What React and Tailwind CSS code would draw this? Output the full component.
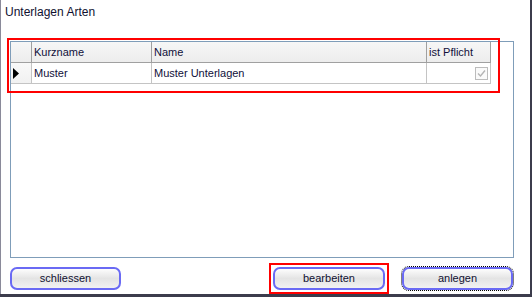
const font = { fontFamily: '"Liberation Sans", Arial, sans-serif' }

const Button = ({ label, focused, className = "" }) => (
  <div className={`${className} ${focused ? "outline outline-1 outline-dotted outline-black" : ""} h-[23px] rounded-[7px]`}>
    <div className="h-full rounded-[7px] border-2 border-[#6a6af4] bg-gradient-to-b from-[#fdfdfd] via-[#e4e4e4] to-[#f2f2f2] flex items-center justify-center text-[11px] text-[#101030]">
      {label}
    </div>
  </div>
)

const HeadCell = ({ children, className = "" }) => (
  <div
    className={`h-[21px] border-r border-b border-[#a0a0a0] bg-gradient-to-b from-[#f7f7f7] to-[#ededed] flex items-center pl-[2px] text-[11px] text-[#10103a] ${className}`}
  >
    {children}
  </div>
)

const Cell = ({ children, className = "" }) => (
  <div className={`h-[21px] border-r border-b border-[#c4c4c4] bg-white flex items-center pl-[2px] text-[11px] text-[#10103a] ${className}`}>
    {children}
  </div>
)

export default function App() {
  return (
    <div className="w-[532px] h-[297px] bg-[#3c3c4c] overflow-hidden" style={font}>
      <div className="w-[530px] h-[294px] bg-white border-l border-[#8a8a9a] flex flex-col">
        <div className="h-[28px] pl-[4px] pt-[5px] text-[12px] text-[#101030] leading-[14px]">Unterlagen Arten</div>

        <div className="relative ml-[9px] mt-[13px] w-[504px] h-[217px] border border-[#7f9db9]">
          <div className="grid grid-cols-[21px_120px_275px_64px] w-[480px]">
            <HeadCell />
            <HeadCell className="pl-[1px]">Kurzname</HeadCell>
            <HeadCell>Name</HeadCell>
            <HeadCell>ist Pflicht</HeadCell>

            <Cell className="bg-gradient-to-b from-[#f9f9f9] to-[#f1f1f1] border-[#a0a0a0] pl-[2px]">
              <svg width="7" height="11" viewBox="0 0 7 11">
                <path d="M0 0 L6 5.5 L0 11 Z" fill="#000" />
              </svg>
            </Cell>
            <Cell className="pl-[1px]">Muster</Cell>
            <Cell>Muster Unterlagen</Cell>
            <Cell className="justify-end pr-[2px]">
              <div className="w-[13px] h-[13px] border border-[#bcbcbc] bg-[#fafafa] flex items-center justify-center">
                <svg width="9" height="9" viewBox="0 0 9 9">
                  <path d="M1 4.5 L3.5 7 L8 1.5" stroke="#b4b4b4" strokeWidth="1.4" fill="none" />
                </svg>
              </div>
            </Cell>
          </div>

          <div className="absolute left-[-4px] top-[-4px] w-[493px] h-[55px] border-2 border-[#ff0000] pointer-events-none" />
        </div>

        <div className="flex items-center mt-[5px] pl-[9px]">
          <Button label="schliessen" className="w-[111px]" />
          <div className="ml-[148px] p-[2px] border-2 border-[#ff0000]">
            <Button label="bearbeiten" className="w-[112px]" />
          </div>
          <Button label="anlegen" focused className="ml-[13px] w-[111px]" />
        </div>
      </div>
    </div>
  )
}
